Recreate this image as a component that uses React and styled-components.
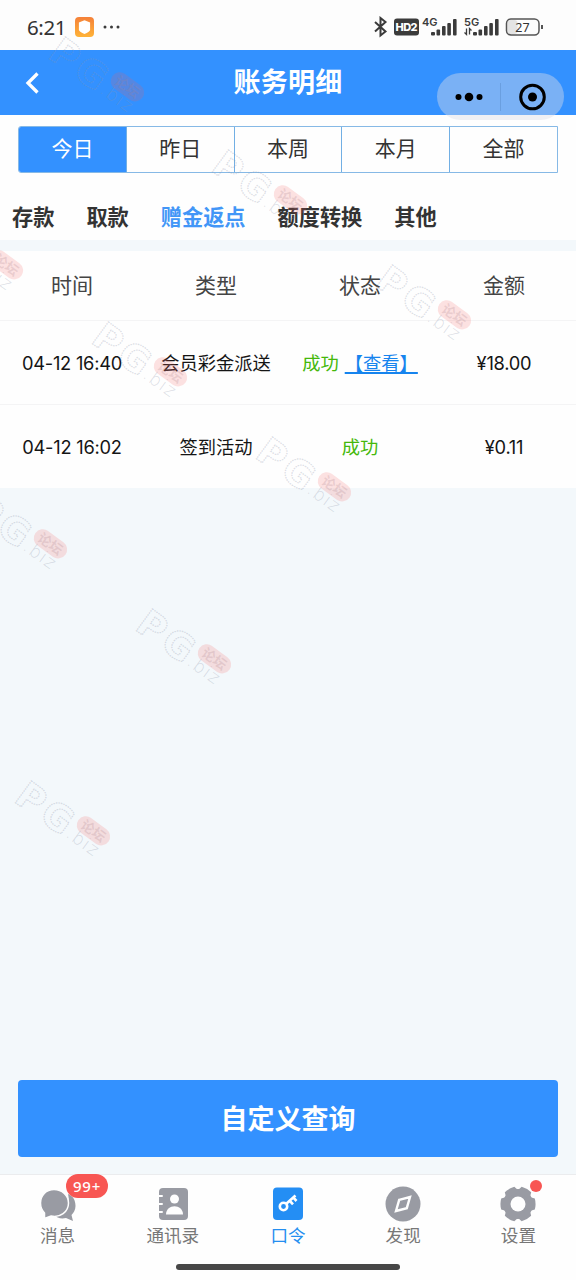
import React from 'react';
import styled, { createGlobalStyle } from 'styled-components';

const GlobalStyle = createGlobalStyle`
    * {
        box-sizing: border-box;
    }

    body {
        margin: 0;
        background: #f3f8fc;
        font-family: Inter, 'Noto Sans CJK SC', sans-serif;
    }
`

const Page = styled.div`
    position: relative;
    display: flex;
    flex-direction: column;
    height: 1280px;
    overflow: hidden;
    background: #f3f8fb;
    color: #333;
`

const StatusBar = styled.div`
    display: flex;
    align-items: center;
    justify-content: space-between;
    height: 50px;
    padding: 4px 32px 0 27px;
    background: #fdfdfd;
`

const StatusGroup = styled.div`
    display: flex;
    align-items: center;
    height: 24px;
`

const Clock = styled.span`
    width: 47px;
    font: 400 20.5px/24px 'Noto Sans', sans-serif;
    letter-spacing: -0.4px;
    color: #333;
`

const Header = styled.header`
    position: relative;
    display: flex;
    align-items: center;
    justify-content: center;
    height: 65px;
    padding-top: 1px;
    background: #3391ff;
`

const BackIcon = styled.svg`
    position: absolute;
    left: 24px;
    top: 21px;
`

const Title = styled.h1`
    margin: 0;
    font-size: 27px;
    line-height: 40px;
    font-weight: 700;
    letter-spacing: 0.3px;
    color: #fff;
`

const Capsule = styled.div`
    position: absolute;
    z-index: 2;
    left: 437px;
    top: 23px;
    display: flex;
    align-items: center;
    width: 127px;
    height: 47px;
    border-radius: 24px;
    background: rgba(222, 222, 232, 0.42);
`

const Filters = styled.div`
    height: 125px;
    padding: 11px 18px 0;
    background: #fefefe;
`

const RangeTabs = styled.div`
    display: flex;
    height: 47px;
    border: 1px solid #86b9e6;
    border-radius: 3px 0 0 3px;
    overflow: hidden;
`

const RangeTab = styled.div`
    flex: 1;
    font-size: 21px;
    line-height: 43px;
    text-align: center;
    color: ${props => props.$active ? '#fff' : '#333'};
    background: ${props => props.$active ? '#3391ff' : 'transparent'};

    & + & {
        border-left: 1px solid #72afe4;
    }
`

const Categories = styled.div`
    display: flex;
    gap: 32px;
    margin: 28px 0 0 -6px;
`

const Category = styled.span`
    font-size: 21.2px;
    line-height: 32px;
    font-weight: 700;
    white-space: nowrap;
    color: ${props => props.$active ? '#4296f7' : '#333'};
`

const Table = styled.div`
    margin-top: 11px;
    background: #fefefe;
`

const Row = styled.div`
    display: grid;
    grid-template-columns: repeat(4, 1fr);
    align-items: center;
    height: ${props => props.$head ? 69 : 84}px;
    padding-bottom: ${props => props.$head ? 3 : 1}px;
    border-top: ${props => props.$head ? '0' : '1px solid #f4f4f5'};
    font-size: ${props => props.$head ? 21 : 18.3}px;
    color: ${props => props.$head ? '#444' : '#151515'};
    text-align: center;
    white-space: nowrap;
`

const Latin = styled.span`
    padding-top: 1px;
    font-size: 18.3px;
    letter-spacing: -0.25px;
`

const Done = styled.span`
    color: #45b80b;
`

const ViewLink = styled.a`
    margin-left: 6px;
    color: #1684ee;
    text-decoration: underline;
    text-decoration-thickness: 1.5px;
    text-underline-offset: 2px;
`

const QueryButton = styled.button`
    height: 77px;
    margin: auto 18px 17px;
    padding: 0 0 2px;
    border: 0;
    border-radius: 4px;
    background: #3391ff;
    color: #fff;
    font: 700 27px/40px 'Noto Sans CJK SC', sans-serif;
`

const TabBar = styled.nav`
    display: grid;
    grid-template-columns: repeat(5, 1fr);
    height: 106px;
    padding-top: 11px;
    border-top: 1px solid #ebecee;
    background: #fefefe;
`

const TabItem = styled.div`
    position: relative;
    display: flex;
    flex-direction: column;
    align-items: center;
    font-size: 17.6px;
    line-height: 24px;
    color: ${props => props.$active ? '#248ef0' : '#777'};

    svg {
        display: block;
        margin-bottom: 2px;
    }
`

const CountBadge = styled.span`
    position: absolute;
    left: 66px;
    top: -12px;
    width: 42px;
    height: 24px;
    border-radius: 12px;
    background: #f85653;
    color: #fff;
    font: 500 15px/24px 'Noto Sans', sans-serif;
    letter-spacing: 0.8px;
    text-align: center;
`

const Dot = styled.span`
    position: absolute;
    left: 69px;
    top: -6px;
    width: 12px;
    height: 12px;
    border-radius: 50%;
    background: #f85653;
`

const HomeIndicator = styled.div`
    position: absolute;
    left: 176px;
    bottom: 10px;
    width: 224px;
    height: 6px;
    border-radius: 3px;
    background: #474747;
`

const Mark = styled.div`
    position: absolute;
    z-index: 3;
    left: ${props => props.$x}px;
    top: ${props => props.$y}px;
    width: 110px;
    height: 90px;
    pointer-events: none;
`

const ranges = ['今日', '昨日', '本周', '本月', '全部'];
const categories = ['存款', '取款', '赠金返点', '额度转换', '其他'];
const records = [
    { time: '04-12 16:40', type: '会员彩金派送', amount: '¥18.00', view: true },
    { time: '04-12 16:02', type: '签到活动', amount: '¥0.11' },
];
const marks = [[48, 32], [211, 145], [-73, 210], [375, 260], [91, 317], [255, 432], [-29, 489], [135, 604], [14, 776]];

// Five rising bars, the cellular label sits over the short ones
function Signal({ label, data }) {
    return (
        <svg width="36" height="22" viewBox="0 0 36 22" fill="#3b3b3b">
            <text x="0" y="9.5" fontFamily="Inter" fontSize="11" fontWeight="600">{label}</text>
            <rect x="9" y="16" width="4" height="3.5" rx="1" />
            <rect x="14.5" y="13.5" width="3.6" height="6" rx="1" />
            <rect x="20" y="10" width="3.6" height="9.5" rx="1" />
            <rect x="25.3" y="7" width="3.6" height="12.5" rx="1" />
            <rect x="31" y="3" width="3.6" height="16.5" rx="1" />
            {data && <path d="M2.5 12.5v6l-2-2M5.5 18.5v-6l2 2" fill="none" stroke="#3b3b3b" strokeWidth="1.3" />}
        </svg>
    )
}

function Watermark({ x, y }) {
    return (
        <Mark $x={x} $y={y}>
            <svg width="110" height="90" viewBox="0 0 110 90" overflow="visible">
                <g transform="translate(2 27) rotate(36)">
                    <g fill="none" stroke="#8b93a8" strokeOpacity="0.3" strokeWidth="1.3" strokeDasharray="1.5 1" fontFamily="DejaVu Sans" fontSize="37" fontWeight="700">
                        {x > -60 && <text x="-4" y="0">P</text>}
                        {x > -60 && <text x="27" y="0">G</text>}
                    </g>
                    <text x="59" y="-2" fill="#8b93a8" fillOpacity="0.3" fontFamily="DejaVu Sans" fontSize="18" fontWeight="200" letterSpacing="1.2">.biz</text>
                    <rect x="60.5" y="-32" width="37" height="18" rx="9" fill="#f46060" fillOpacity="0.18" />
                    <text x="65.5" y="-18" fill="#a98088" fillOpacity="0.22" fontFamily="Noto Sans CJK SC" fontSize="13.5" fontWeight="700">论坛</text>
                </g>
            </svg>
        </Mark>
    )
}

function MessageIcon() {
    return (
        <svg width="36" height="36" viewBox="0 0 36 36" fill="#999ba3">
            <path d="M28 8c5 2 7.500 6 7.500 12 0 4-2 7-4 9l1.500 6-7-3c-5 1-9 0-12-3 10 0 17-9 14-21z" />
            <path d="M14 3.500C6 3.500.5 9.500.5 17c0 5 2 8 4 10v5.500l6.500-2.500C20 32 28.500 26 28.500 17 28.500 9.500 22 3.500 14 3.500z" stroke="#fefefe" strokeWidth="1.5" />
        </svg>
    )
}

function ContactsIcon() {
    return (
        <svg width="36" height="36" viewBox="0 0 36 36">
            <rect x="4" y="2" width="29" height="32" rx="4" fill="#999ba3" />
            <path d="M2 10h5M2 18h5M2 26h5" stroke="#fefefe" strokeWidth="2" strokeLinecap="round" />
            <circle cx="19.5" cy="13" r="4.5" fill="#fefefe" />
            <path d="M11 28.5c0-11 17-11 17 0z" fill="#fefefe" />
        </svg>
    )
}

function KeyIcon() {
    return (
        <svg width="36" height="36" viewBox="0 0 36 36">
            <rect x="3" y="1.5" width="30" height="32.5" rx="4" fill="#248ef4" />
            <g fill="none" stroke="#fff" strokeWidth="2.6">
                <circle cx="13.5" cy="20.5" r="3.7" />
                <path d="M16 18l9.500-8.500M19.500 14.500l3.500 3.800M23 11.200l3.500 3.800" />
            </g>
        </svg>
    )
}

function CompassIcon() {
    return (
        <svg width="36" height="36" viewBox="0 0 36 36">
            <circle cx="18" cy="18" r="17.5" fill="#999ba3" />
            <path d="M14.200 13.800l10.800-2.800-3.200 11.200-10.800 2.800z" fill="none" stroke="#fefefe" strokeWidth="2.4" />
        </svg>
    )
}

function GearIcon() {
    return (
        <svg width="36" height="36" viewBox="0 0 36 36">
            <g fill="#999ba3">
                <circle cx="18" cy="18" r="15" />
                {[30, 90, 150, 210, 270, 330].map(angle => (
                    <path key={angle} transform={`rotate(${angle} 18 18)`} d="M10.500 8l2-6.800q5.500-1.500 11 0l2 6.800z" />
                ))}
            </g>
            <circle cx="18" cy="18" r="7.5" fill="#fefefe" />
        </svg>
    )
}

const tabs = [
    { label: '消息', icon: MessageIcon, count: '99+' },
    { label: '通讯录', icon: ContactsIcon },
    { label: '口令', icon: KeyIcon, active: true },
    { label: '发现', icon: CompassIcon },
    { label: '设置', icon: GearIcon, dot: true },
];

function Status() {
    return (
        <StatusBar>
            <StatusGroup>
                <Clock>6:21</Clock>
                <svg width="48" height="20" viewBox="0 0 48 20">
                    <defs>
                        <linearGradient id="shield" x2="0" y2="1">
                            <stop stopColor="#f58139" />
                            <stop offset="1" stopColor="#ffb338" />
                        </linearGradient>
                    </defs>
                    <rect x="1" width="19" height="20" rx="4" fill="url(#shield)" />
                    <path d="M10.500 3.200l5.600 2.300v7.500q-.7 2-5.600 4-4.900-2-5.600-4v-7.500z" fill="#fff" />
                    <g fill="#3b3b3b">
                        <circle cx="31" cy="10" r="1.5" />
                        <circle cx="37.5" cy="10" r="1.5" />
                        <circle cx="44" cy="10" r="1.5" />
                    </g>
                </svg>
            </StatusGroup>
            <StatusGroup>
                <svg width="48" height="22" viewBox="0 0 48 22">
                    <path d="M1 6l10.500 9.500-5 4V2l5 4L1 15.500" fill="none" stroke="#3b3b3b" strokeWidth="2" />
                    <rect x="20" y="2.5" width="25" height="17" rx="3" fill="#3b3b3b" />
                    <text x="21.5" y="15" fill="#fff" fontFamily="Inter" fontSize="11" fontWeight="800" textLength="22">HD2</text>
                </svg>
                <Signal label="4G" />
                <svg width="6" height="22" />
                <Signal label="5G" data />
                <svg width="44" height="22" viewBox="0 0 44 22">
                    <rect x="7.5" y="4" width="10" height="14" rx="3" fill="#e4e4e4" />
                    <rect x="6.5" y="3" width="32.5" height="16" rx="4.5" fill="none" stroke="#555" strokeWidth="1.5" />
                    <path d="M42 9v4" stroke="#555" strokeWidth="2" />
                    <text x="22.5" y="15.5" textAnchor="middle" fill="#333" fontFamily="Noto Sans" fontSize="12.5">27</text>
                </svg>
            </StatusGroup>
        </StatusBar>
    )
}

function App() {
    return (
        <Page>
            <GlobalStyle />
            <Status />
            <Header>
                <BackIcon width="18" height="24" viewBox="0 0 18 24">
                    <path d="M13.5 2.5L4 12l9.5 9.5" fill="none" stroke="#fff" strokeWidth="3.3" />
                </BackIcon>
                <Title>账务明细</Title>
                <Capsule>
                    <svg width="127" height="47" viewBox="0 0 127 47">
                        <circle cx="21.5" cy="24" r="3" />
                        <circle cx="32" cy="24" r="4.3" />
                        <circle cx="42.5" cy="24" r="3" />
                        <path d="M63.5 10v28" stroke="#6a9fe0" />
                        <circle cx="95.5" cy="24" r="11.8" fill="none" stroke="#000" strokeWidth="3" />
                        <circle cx="95.5" cy="24" r="4.5" />
                    </svg>
                </Capsule>
            </Header>
            <Filters>
                <RangeTabs>
                    {ranges.map((range, i) => <RangeTab key={range} $active={i === 0}>{range}</RangeTab>)}
                </RangeTabs>
                <Categories>
                    {categories.map((name, i) => <Category key={name} $active={i === 2}>{name}</Category>)}
                </Categories>
            </Filters>
            <Table>
                <Row $head>
                    <span>时间</span>
                    <span>类型</span>
                    <span>状态</span>
                    <span>金额</span>
                </Row>
                {records.map(record => (
                    <Row key={record.time}>
                        <Latin>{record.time}</Latin>
                        <span>{record.type}</span>
                        <span>
                            <Done>成功</Done>
                            {record.view && <ViewLink>【查看】</ViewLink>}
                        </span>
                        <Latin>{record.amount}</Latin>
                    </Row>
                ))}
            </Table>
            <QueryButton>自定义查询</QueryButton>
            <TabBar>
                {tabs.map(tab => (
                    <TabItem key={tab.label} $active={tab.active}>
                        <tab.icon />
                        {tab.label}
                        {tab.count && <CountBadge>{tab.count}</CountBadge>}
                        {tab.dot && <Dot />}
                    </TabItem>
                ))}
            </TabBar>
            <HomeIndicator />
            {marks.map(([x, y]) => <Watermark key={y} x={x} y={y} />)}
        </Page>
    )
}

export default App;
